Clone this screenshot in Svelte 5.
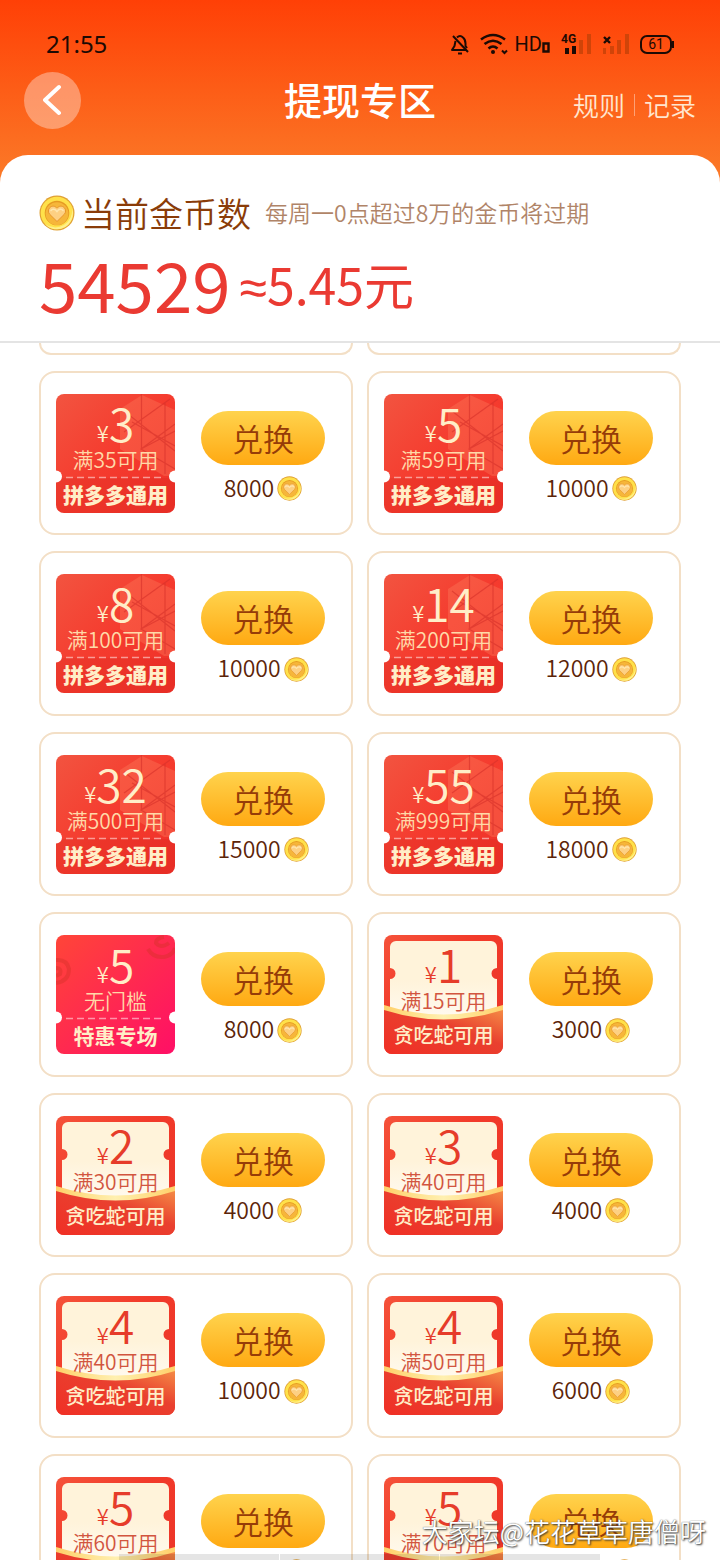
<!--
  Withdraw page
  Coin balance on top, grid of redeemable coupons below
-->
<script lang="ts">
  type CouponKind = "general" | "special" | "snake";

  interface Coupon {
    kind: CouponKind;
    value: number;
    condition: string;
    price: number;
  }

  const labels: Record<CouponKind, string> = {
    general: "拼多多通用",
    special: "特惠专场",
    snake: "贪吃蛇可用",
  };

  const coupons: Coupon[] = [
    { kind: "general", value: 3, condition: "满35可用", price: 8000 },
    { kind: "general", value: 5, condition: "满59可用", price: 10000 },
    { kind: "general", value: 8, condition: "满100可用", price: 10000 },
    { kind: "general", value: 14, condition: "满200可用", price: 12000 },
    { kind: "general", value: 32, condition: "满500可用", price: 15000 },
    { kind: "general", value: 55, condition: "满999可用", price: 18000 },
    { kind: "special", value: 5, condition: "无门槛", price: 8000 },
    { kind: "snake", value: 1, condition: "满15可用", price: 3000 },
    { kind: "snake", value: 2, condition: "满30可用", price: 4000 },
    { kind: "snake", value: 3, condition: "满40可用", price: 4000 },
    { kind: "snake", value: 4, condition: "满40可用", price: 10000 },
    { kind: "snake", value: 4, condition: "满50可用", price: 6000 },
    { kind: "snake", value: 5, condition: "满60可用", price: 10000 },
    { kind: "snake", value: 5, condition: "满70可用", price: 10000 },
  ];
</script>

{#snippet coin(className: string)}
  <svg class={className} viewBox="0 0 36 36" aria-hidden="true">
    <circle cx="18" cy="18" r="17.5" fill="#e0a035" />
    <circle cx="18" cy="18" r="16.3" fill="#ffe14a" />
    <path d="M6 29a16 16 0 0 0 27-16 17 17 0 0 1-27 16Z" fill="#fff08a" />
    <circle cx="18" cy="18" r="12.3" fill="#e69a22" />
    <circle cx="18" cy="18.6" r="11.4" fill="#f6b63a" />
    <path
      d="M18 26.500 10.800 19.400a4.800 4.800 0 0 1 0-6.800c2.100-2 5.200-1.900 7.200.600 2-2.500 5.100-2.600 7.200-.600a4.800 4.800 0 0 1 0 6.800Z"
      fill="#fdd083"
      stroke="#e8962c"
      stroke-width="1"
    />
    <path d="M12 15.500c1.400-2 4-1.500 6 1 2-2.500 4.600-3 6-1" fill="none" stroke="#ffe6ae" stroke-width="1.600" stroke-linecap="round" />
  </svg>
{/snippet}

{#snippet couponArt(kind: CouponKind)}
  <svg class="coupon-art" viewBox="0 0 119 119" aria-hidden="true">
    {#if kind === "snake"}
      <rect width="119" height="119" rx="8" fill="url(#snake-frame)" />
      <path
        d="M12 6h95a6 6 0 0 1 6 6v21a5.500 5.500 0 0 0 0 11v40H6V44a5.500 5.500 0 0 0 0-11V12a6 6 0 0 1 6-6Z"
        fill="url(#snake-paper)"
      />
      <path d="M0 70Q59.500 89 119 70V86H0Z" fill="url(#snake-band)" />
      <path d="M0 75Q59.500 94 119 75v36a8 8 0 0 1-8 8H8a8 8 0 0 1-8-8Z" fill="url(#snake-base)" />
    {:else}
      <rect width="119" height="119" rx="8" fill="url(#{kind}-fill)" />
      {#if kind === "general"}
        <path d="M64 15 86 1l33 15v66h-11L64 55Z" fill="#ff8a68" opacity=".3" />
        <g fill="none" stroke="#d5302a" stroke-opacity=".6" stroke-width="1.200">
          <path d="M85.500 0v55M109 8v72M68 17l51 40M114 5 68 38M119 37 85 55l34 20M76 28l43 24M85 55l34-25" />
        </g>
        <path d="M0 84h119v27a8 8 0 0 1-8 8H8a8 8 0 0 1-8-8Z" fill="#c91e18" opacity=".16" />
      {:else}
        <g fill="none" stroke="#d8302a" stroke-opacity=".45" stroke-width="4">
          <path d="M0 25q11-1 13 9 0 12-13 14M0 33q6 0 4 6l-4 2" />
          <path d="M92 14q5 9 16 8 9-2 11-9M108 2q-8 1-8 6 5 6 13 0" />
        </g>
      {/if}
      <path d="M10 83.500h99" stroke="#fff" stroke-opacity=".5" stroke-width="1.500" stroke-dasharray="7 4" />
      <circle cx="0" cy="82.500" r="6" fill="#fff" />
      <circle cx="119" cy="82.500" r="6" fill="#fff" />
    {/if}
  </svg>
{/snippet}

<!-- Gradients shared by every coupon -->
<svg class="defs" width="0" height="0" aria-hidden="true">
  <defs>
    <linearGradient id="general-fill" x1="0" y1="0" x2="1" y2="1">
      <stop offset="0" stop-color="#f25440" />
      <stop offset=".5" stop-color="#f53b2e" />
      <stop offset="1" stop-color="#ee3028" />
    </linearGradient>
    <linearGradient id="special-fill" x1="0" y1="0" x2="1" y2="1">
      <stop offset="0" stop-color="#ff4538" />
      <stop offset="1" stop-color="#ff0f66" />
    </linearGradient>
    <linearGradient id="snake-frame" x1="0" y1="0" x2="1" y2="1">
      <stop offset="0" stop-color="#f5523a" />
      <stop offset=".4" stop-color="#f23a2a" />
      <stop offset="1" stop-color="#ea3428" />
    </linearGradient>
    <linearGradient id="snake-paper" x1="0" y1="0" x2="0" y2="1">
      <stop offset=".5" stop-color="#fff3da" />
      <stop offset="1" stop-color="#fffaf0" />
    </linearGradient>
    <linearGradient id="snake-band" x1="0" y1="0" x2="1" y2="0">
      <stop offset="0" stop-color="#ffd069" />
      <stop offset=".5" stop-color="#fff0b0" />
      <stop offset="1" stop-color="#ffd069" />
    </linearGradient>
    <linearGradient id="snake-base" x1="0" y1="1" x2="1" y2="0">
      <stop offset="0" stop-color="#f02f25" />
      <stop offset=".6" stop-color="#e9402f" />
      <stop offset="1" stop-color="#f48a45" />
    </linearGradient>
  </defs>
</svg>

<div class="page">
  <header class="top">
    <div class="status-bar">
      <span class="clock">21:55</span>
      <div class="status-icons">
        <svg width="18" height="22" viewBox="0 0 18 22" fill="none" stroke="#1c0a04" stroke-width="2" stroke-linejoin="round" aria-hidden="true">
          <path d="M6 4.500Q9 1.500 12 4.500q2.500 2 2.500 6V13l1.500 2M4.500 8 3.500 13 1 17h13.500M2 3l15 16" />
          <path d="M7 20.500h4" />
        </svg>
        <svg width="28" height="22" viewBox="0 0 28 22" fill="none" stroke="#1c0a04" stroke-width="2.600" aria-hidden="true">
          <path d="M1 6.500q12-9 24 0M4.500 11q8.500-6.500 17 0M8.500 15.500q4.500-4 9 0" />
          <circle cx="13" cy="19" r="2" fill="#1c0a04" stroke="none" />
          <path d="m22 17.500 2.500 2.500 2.500-2.500" stroke-width="2" />
        </svg>
        <span class="hd">HD<svg width="8" height="11" viewBox="0 0 8 11" fill="none" stroke="#1c0a04" stroke-width="2.400" aria-hidden="true"><path d="M1.500 1.500h5v8h-5Z" /></svg></span>
        <div class="signal">
          <span class="network">4G</span>
          <svg width="30" height="22" viewBox="0 0 30 22" aria-hidden="true">
            <path d="M4 15h4v6H4ZM11 13h4v8h-4Z" fill="#1c0a04" />
            <path d="M18 7h4v14h-4ZM26 1h4v20h-4Z" fill="#d04409" />
          </svg>
        </div>
        <svg width="27" height="22" viewBox="0 0 27 22" aria-hidden="true">
          <path d="m2 4 6 6M8 4l-6 6" stroke="#1c0a04" stroke-width="2.400" />
          <path d="M1 15h3v6H1ZM8 13h4v8H8ZM15 7h4v14h-4ZM23 1h4v20h-4Z" fill="#d04409" />
        </svg>
        <span class="battery">61</span>
      </div>
    </div>

    <nav class="nav">
      <button type="button" class="back" aria-label="返回">
        <svg width="20" height="32" viewBox="0 0 20 32" fill="none" stroke="#fff" stroke-width="4" stroke-linecap="round" stroke-linejoin="round" aria-hidden="true">
          <path d="M16 3 2 16l14 13" />
        </svg>
      </button>
      <h1>提现专区</h1>
      <div class="links">
        <a href="#rules">规则</a>
        <span class="divider"></span>
        <a href="#records">记录</a>
      </div>
    </nav>
  </header>

  <section class="balance">
    <div class="balance-head">
      {@render coin("coin-lg")}
      <h2>当前金币数</h2>
      <p class="note">每周一0点超过8万的金币将过期</p>
    </div>
    <p class="amount">
      <span class="coins">54529</span>
      <span class="cash"><span class="approx">≈</span>5.45元</span>
    </p>
  </section>

  <ul class="grid">
    <li class="tail"></li>
    <li class="tail"></li>
    {#each coupons as coupon, index (index)}
      <li class="card">
        <div class="coupon {coupon.kind}">
          {@render couponArt(coupon.kind)}
          <span class="value"><span class="yen">¥</span>{coupon.value}</span>
          <span class="condition">{coupon.condition}</span>
          <span class="label">{labels[coupon.kind]}</span>
        </div>
        <div class="redeem">
          <button type="button" class="redeem-btn">兑换</button>
          <div class="price">
            <span>{coupon.price}</span>
            {@render coin("coin-sm")}
          </div>
        </div>
      </li>
    {/each}
  </ul>

  <div class="bottom-strip" aria-hidden="true">
    <span></span>
    <span></span>
    <span></span>
  </div>
  <span class="watermark">大家坛@花花草草唐僧呀</span>
</div>

<style>
  :global(body) {
    margin: 0;
    background: #fff;
  }

  .page {
    position: relative;
    display: flex;
    flex-direction: column;
    height: 100vh;
    overflow: hidden;
    background: linear-gradient(#ff4006, #fb7a28 180px);
    font-family: "Noto Sans CJK SC", sans-serif;
  }

  .defs {
    position: absolute;
  }

  h1,
  h2,
  p,
  ul {
    margin: 0;
    padding: 0;
    font-weight: 400;
  }

  button {
    border: 0;
    padding: 0;
    font-family: inherit;
    cursor: pointer;
  }

  /* Status bar */
  .status-bar {
    display: flex;
    align-items: center;
    justify-content: space-between;
    height: 24px;
    padding: 32px 48px 15px 46px;
    color: #1c0a04;
    font-family: "Noto Sans", sans-serif;
  }

  .clock {
    font-size: 24px;
    line-height: 24px;
  }

  .status-icons {
    display: flex;
    align-items: center;
    gap: 11px;
  }

  .status-icons svg {
    display: block;
  }

  .hd {
    display: flex;
    align-items: flex-end;
    margin-left: -4px;
    font-family: Roboto, sans-serif;
    font-size: 20px;
    line-height: 17px;
  }

  .signal {
    position: relative;
  }

  .network {
    position: absolute;
    top: -1px;
    left: 0;
    font-family: Roboto, sans-serif;
    font-size: 12px;
    font-weight: 700;
    line-height: 14px;
  }

  .battery {
    position: relative;
    width: 28px;
    border: 2px solid #1c0a04;
    border-radius: 7px;
    font-family: Roboto, sans-serif;
    font-size: 14px;
    line-height: 15px;
    text-align: center;
  }

  .battery::after {
    content: "";
    position: absolute;
    top: 4px;
    right: -4px;
    width: 2px;
    height: 7px;
    background: #1c0a04;
  }

  /* Title row */
  .nav {
    display: grid;
    grid-template-columns: 1fr auto 1fr;
    align-items: center;
    height: 58px;
    padding: 0 24px 26px;
  }

  .back {
    display: grid;
    place-items: center;
    width: 57px;
    height: 57px;
    border-radius: 50%;
    background: rgba(255, 255, 255, 0.35);
  }

  h1 {
    color: #fff;
    font-size: 38px;
    font-weight: 500;
    line-height: 56px;
    padding-bottom: 2px;
  }

  .links {
    display: flex;
    align-items: center;
    justify-content: flex-end;
    gap: 9px;
    padding-top: 10px;
  }

  .links a {
    color: #ffe6cf;
    font-size: 26px;
    font-weight: 350;
    line-height: 32px;
    text-decoration: none;
  }

  .divider {
    width: 1px;
    height: 22px;
    background: rgba(255, 255, 255, 0.4);
  }

  /* Balance */
  .balance {
    padding: 36px 39px 18px;
    border-bottom: 2px solid #e4e4e4;
    border-radius: 28px 28px 0 0;
    background: #fff;
  }

  .balance-head {
    display: flex;
    align-items: center;
    height: 44px;
  }

  .coin-lg {
    width: 36px;
    height: 36px;
    margin-right: 6px;
  }

  h2 {
    color: #8a3c08;
    font-size: 34px;
    font-weight: 350;
    line-height: 44px;
  }

  .note {
    margin-left: 14px;
    color: #b08468;
    font-size: 23px;
    font-weight: 350;
    line-height: 42px;
    padding-bottom: 2px;
  }

  .amount {
    display: flex;
    align-items: center;
    gap: 9px;
    height: 88px;
    color: #ea3a32;
  }

  .coins,
  .cash {
    padding-top: 8px;
    line-height: 88px;
  }

  .coins {
    font-size: 69px;
  }

  .cash {
    font-size: 50px;
  }

  .approx {
    font-family: "Noto Sans", sans-serif;
    line-height: 50px;
  }

  /* Coupon grid */
  .grid {
    flex: 1;
    display: grid;
    grid-template-columns: 1fr 1fr;
    grid-auto-rows: max-content;
    gap: 16px 14px;
    min-height: 0;
    padding: 0 39px;
    overflow: hidden;
    background: #fff;
    list-style: none;
  }

  .card,
  .tail {
    box-sizing: border-box;
    border: 2px solid #f3dfc6;
    border-radius: 16px;
  }

  /* Lower edge of the row scrolled under the balance panel */
  .tail {
    height: 12px;
    border-top: 0;
    border-radius: 0 0 16px 16px;
  }

  .card {
    display: flex;
    align-items: center;
    justify-content: space-between;
    aspect-ratio: 21 / 11;
    padding: 0 26px 0 15px;
  }

  .coupon {
    position: relative;
    display: flex;
    flex-direction: column;
    align-items: center;
    width: 119px;
    height: 119px;
    color: #ffeec8;
  }

  .coupon-art {
    position: absolute;
    inset: 0;
    width: 100%;
    height: 100%;
  }

  .value,
  .condition,
  .label {
    position: relative;
    white-space: nowrap;
  }

  .value {
    font-size: 46px;
    font-weight: 350;
    line-height: 56px;
  }

  .yen {
    font-size: 22px;
    line-height: 22px;
  }

  .condition {
    margin-bottom: 12px;
    color: #ffd9a8;
    font-size: 21px;
    font-weight: 350;
    line-height: 18px;
  }

  .label {
    font-size: 21px;
    font-weight: 700;
    line-height: 28px;
  }

  .general .label {
    font-weight: 900;
  }

  .snake .value {
    color: #e63c2a;
  }

  .snake .condition {
    color: #d2553f;
  }

  .snake .label {
    font-size: 20px;
    font-weight: 500;
  }

  .redeem {
    display: flex;
    flex-direction: column;
    align-items: center;
    gap: 9px;
    padding-top: 8px;
  }

  .redeem-btn {
    width: 124px;
    height: 54px;
    border-radius: 27px;
    background: linear-gradient(#ffd34d, #ffa912);
    color: #963c08;
    font-size: 31px;
    font-weight: 350;
    line-height: 52px;
  }

  .price {
    display: flex;
    align-items: center;
    gap: 3px;
    height: 30px;
    color: #5c2408;
    font-size: 23px;
    font-weight: 350;
  }

  .price span {
    padding-bottom: 4px;
    line-height: 26px;
  }

  .coin-sm {
    width: 25px;
    height: 25px;
  }

  /* Overlays along the bottom edge */
  .bottom-strip {
    position: absolute;
    right: 120px;
    bottom: 0;
    left: 119px;
    display: flex;
    gap: 1px;
    height: 6px;
  }

  .bottom-strip span {
    flex: 1;
    background: rgba(0, 0, 0, 0.1);
  }

  .watermark {
    position: absolute;
    right: 14px;
    bottom: 11px;
    color: #fff;
    font-size: 26px;
    font-weight: 350;
    line-height: 36px;
    text-shadow: 1px 1px 2px #333, 0 0 1px #555;
  }
</style>
